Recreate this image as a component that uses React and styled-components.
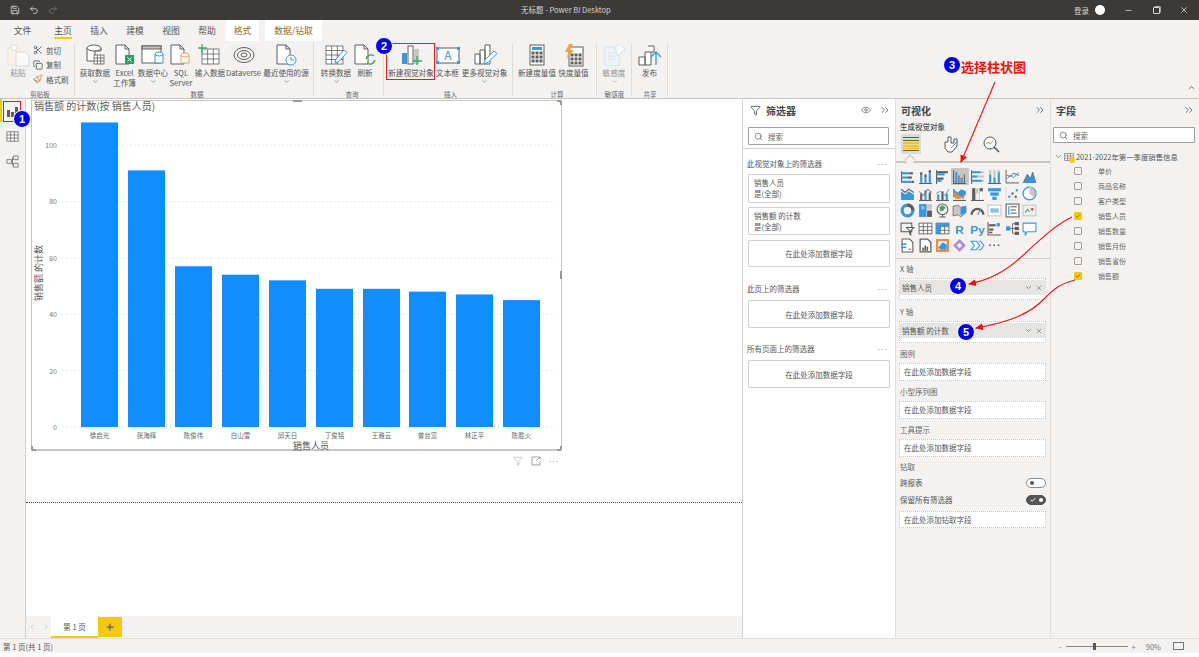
import React from "react";
import styled, { createGlobalStyle } from "styled-components";
import { Scissors, Copy, Paintbrush, Save, Undo2, Redo2, Minus, X, Search, Filter, Eye, ChevronsRight, ChevronDown, ChevronUp, ChevronLeft, ChevronRight, Plus, Check } from "lucide-react";

const GREY = "#605e5c";
const BLUE = "#3a96dd";
const LIGHT = "#c8c6c4";

const Bar = ({ r }) => r.map(([x, y, w, h, c], i) => <rect key={i} x={x} y={y} width={w} height={h} fill={c || GREY} />);

const Icon24 = ({ children }) => (
  <svg width="26" height="24" viewBox="0 0 26 24" fill="none" strokeWidth="1" stroke={GREY}>
    {children}
  </svg>
);

const GridLines = ({ x, y, w, h, cols, rows }) => (
  <g stroke={GREY} strokeWidth="0.8" fill="#fff">
    <rect x={x} y={y} width={w} height={h} />
    {Array.from({ length: cols - 1 }, (_, i) => (
      <line key={i} x1={x + ((i + 1) * w) / cols} x2={x + ((i + 1) * w) / cols} y1={y} y2={y + h} />
    ))}
    {Array.from({ length: rows - 1 }, (_, i) => (
      <line key={i} x1={x} x2={x + w} y1={y + ((i + 1) * h) / rows} y2={y + ((i + 1) * h) / rows} />
    ))}
  </g>
);

const Doc = ({ x = 5, y = 2, c = GREY }) => (
  <path d={`M${x} ${y}h9l4 4v15h-13z M${x + 9} ${y}v4h4`} stroke={c} fill="#fff" />
);

const ribbonIcons = {
  getData: (
    <Icon24>
      <path d="M5 5v13h8V8h6V5" fill="#fff" />
      <ellipse cx="12" cy="5" rx="7" ry="3" fill="#fff" />
      <GridLines x={12} y={12} w={10} h={9} cols={3} rows={3} />
    </Icon24>
  ),
  excel: (
    <Icon24>
      <Doc x={4} y={2} />
      <rect x="13" y="12" width="9" height="9" fill="#21a366" stroke="none" />
      <path d="M15.5 14.5l4 4m0-4l-4 4" stroke="#fff" />
    </Icon24>
  ),
  hub: (
    <Icon24>
      <rect x="2" y="3" width="19" height="17" fill="#fff" />
      <rect x="2" y="3" width="19" height="3" fill={LIGHT} />
      <path d="M15 11v9h8v-9" fill="#fff" stroke={BLUE} />
      <ellipse cx="19" cy="11" rx="4" ry="2" fill="#fff" stroke={BLUE} />
    </Icon24>
  ),
  sql: (
    <Icon24>
      <Doc x={3} y={2} />
      <path d="M13 12v8h8v-8" fill="#fff" stroke="#e8a15c" />
      <ellipse cx="17" cy="12" rx="4" ry="2" fill="#fff" stroke="#e8a15c" />
    </Icon24>
  ),
  enter: (
    <Icon24>
      <GridLines x={5} y={6} w={17} h={15} cols={3} rows={3} />
      <path d="M5 1v9M1 5h9" stroke="#3ea86b" strokeWidth="1.3" />
    </Icon24>
  ),
  dataverse: (
    <Icon24>
      <ellipse cx="13" cy="12" rx="10" ry="7.5" />
      <ellipse cx="13" cy="12" rx="6.5" ry="4.5" />
      <ellipse cx="13" cy="12" rx="3" ry="2" />
    </Icon24>
  ),
  recent: (
    <Icon24>
      <Doc x={4} y={2} />
      <circle cx="18" cy="17" r="5" fill="#fff" stroke={BLUE} />
      <path d="M18 14v3h3" stroke={BLUE} />
    </Icon24>
  ),
  transform: (
    <Icon24>
      <GridLines x={3} y={3} w={17} h={18} cols={3} rows={4} />
      <path d="M12 20l1-4 8-9 3 2.5-8 9z" fill="#fff" stroke={BLUE} />
    </Icon24>
  ),
  refresh: (
    <Icon24>
      <Doc x={3} y={2} />
      <path d="M14 16a5 5 0 0 1 8-3M23 17a5 5 0 0 1-8 3" stroke="#3ea86b" strokeWidth="1.4" />
    </Icon24>
  ),
  newVisual: (
    <Icon24>
      <rect x="4" y="10" width="5" height="11" fill={BLUE} stroke="none" />
      <rect x="10" y="3" width="5" height="18" fill="#fff" />
      <rect x="16" y="6" width="5" height="15" fill={LIGHT} stroke="none" />
      <path d="M19 13v9M15 18h9" stroke="#3ea86b" strokeWidth="1.3" />
    </Icon24>
  ),
  textBox: (
    <Icon24>
      <rect x="2" y="5" width="22" height="15" fill="#fff" stroke={GREY} />
      <text x="13" y="17" textAnchor="middle" fontSize="12" fill={BLUE} stroke="none">A</text>
      <path d="M1 4h3v3H1zM22 4h3v3h-3zM1 18h3v3H1zM22 18h3v3h-3z" fill={BLUE} stroke="none" />
    </Icon24>
  ),
  moreVisual: (
    <Icon24>
      <path d="M3 11h5v10H3zM8 7h5v14H8zM13 2h5v19h-5z" fill="#fff" />
      <path d="M12 21l1-4 9-9 3 2.5-9 9z" fill="#fff" stroke={BLUE} />
    </Icon24>
  ),
  measure: (
    <Icon24>
      <rect x="6" y="2" width="14" height="20" fill="#fff" />
      <rect x="8" y="4" width="10" height="3" fill={BLUE} stroke="none" />
      <Bar r={[[8, 9, 2, 2], [12, 9, 2, 2], [16, 9, 2, 2], [8, 13, 2, 2], [12, 13, 2, 2], [16, 13, 2, 2], [8, 17, 2, 2], [12, 17, 2, 2], [16, 17, 2, 2]]} />
    </Icon24>
  ),
  quick: (
    <Icon24>
      <rect x="8" y="4" width="14" height="19" fill="#fff" />
      <Bar r={[[10, 11, 2, 2], [14, 11, 2, 2], [18, 11, 2, 2], [10, 15, 2, 2], [14, 15, 2, 2], [18, 15, 2, 2], [10, 19, 2, 2], [14, 19, 2, 2], [18, 19, 2, 2]]} />
      <path d="M8 1l-4 8h4l-3 7 8-9H9l3-6z" fill="#f2a33a" stroke="none" />
    </Icon24>
  ),
  sensitivity: (
    <Icon24>
      <path d="M4 4h14v19H4z" fill="#eaf3fa" stroke="#c6dcec" />
      <path d="M7 10h8M7 13h8M7 16h6" stroke="#c6dcec" />
      <path d="M14 4l5-3 5 5-7 7z" fill="#fff" stroke="#c6dcec" />
    </Icon24>
  ),
  publish: (
    <Icon24>
      <path d="M2 14h6v8H2zM8 9h6v13H8zM11 3h6v6h-3" fill="#fff" />
      <path d="M19 22V9m-5 5l5-5 5 5" stroke={BLUE} strokeWidth="1.3" />
    </Icon24>
  ),
  paste: (
    <svg width="26" height="24" viewBox="0 0 26 24" fill="none">
      <path d="M3 5h12v17H3z" fill="#faf3ea" stroke="#ecd9bf" />
      <rect x="6" y="2" width="6" height="5" fill="#fff" stroke="#d5d3d0" />
      <path d="M11 9h9l4 4v10H11z" fill="#fff" stroke="#c8c6c4" />
    </svg>
  ),
};

const vizIcons = [
  <Bar r={[[1, 2, 1, 11], [2, 3, 7, 2, BLUE], [9, 3, 3, 2], [2, 7, 5, 2, BLUE], [7, 7, 4, 2], [2, 11, 9, 2, BLUE], [11, 11, 2, 2]]} />,
  <Bar r={[[1, 13, 12, 1], [2, 6, 2, 7, BLUE], [2, 3, 2, 3], [6, 8, 2, 5, BLUE], [6, 5, 2, 3], [10, 4, 2, 9, BLUE], [10, 1, 2, 3]]} />,
  <Bar r={[[1, 1, 1, 13], [2, 2, 10, 2], [2, 4, 7, 2, BLUE], [2, 8, 6, 2], [2, 10, 4, 2, BLUE]]} />,
  <Bar r={[[1, 13, 12, 1], [1, 1, 1, 13], [3, 3, 2, 10, BLUE], [6, 6, 1, 7], [8, 8, 2, 5, BLUE], [11, 5, 1, 8]]} />,
  <Bar r={[[1, 1, 1, 13], [2, 2, 8, 2, BLUE], [10, 2, 3, 2, LIGHT], [2, 6, 5, 2, BLUE], [7, 6, 6, 2, LIGHT], [2, 10, 9, 2, BLUE], [11, 10, 2, 2, LIGHT]]} />,
  <Bar r={[[1, 13, 12, 1], [2, 1, 2, 4, LIGHT], [2, 5, 2, 8, BLUE], [6, 1, 2, 7, LIGHT], [6, 8, 2, 5, BLUE], [10, 1, 2, 2, LIGHT], [10, 3, 2, 10, BLUE]]} />,
  <g fill="none" strokeWidth="0.9">
    <path d="M1 1v12h12" stroke={GREY} />
    <path d="M2 9l3-3 3 2 5-5" stroke={BLUE} />
    <path d="M2 6l3 1 3-3 5 2" stroke={GREY} />
  </g>,
  <g>
    <path d="M1 13l4-8 3 4 2-6 3 10z" fill={BLUE} />
    <path d="M1 13l4-8 3 4 2-6 3 10" fill="none" stroke={GREY} strokeWidth="0.7" />
  </g>,
  <g>
    <path d="M1 5l4 3 3-3 5 3v5H1z" fill={BLUE} />
    <path d="M1 3l4 3 3-3 5 3" fill="none" stroke={GREY} />
  </g>,
  <g>
    <Bar r={[[1, 13, 12, 1], [2, 7, 2, 6], [6, 4, 2, 9, BLUE], [10, 6, 2, 7]]} />
    <path d="M1 5l4 4 4-6 4 3" fill="none" stroke={GREY} strokeWidth="0.8" />
  </g>,
  <g>
    <Bar r={[[1, 13, 12, 1], [2, 8, 2, 5, BLUE], [6, 5, 2, 8], [10, 7, 2, 6, BLUE]]} />
    <path d="M1 7l4-2 4 4 4-6" fill="none" stroke={BLUE} strokeWidth="0.8" />
  </g>,
  <g>
    <path d="M1 2l4 4 4-3 4 2v3l-4 3-4-3-4 3z" fill={BLUE} />
    <path d="M1 6l4 1 4 5 4-6-2 6H3z" fill="#e8883a" />
    <Bar r={[[1, 13, 12, 1]]} />
  </g>,
  <Bar r={[[1, 13, 12, 1], [2, 2, 3, 11], [5, 2, 3, 5, LIGHT], [9, 2, 3, 11, GREY], [9, 5, 3, 8, "#fff"]]} />,
  <g fill={BLUE}>
    <rect x="1" y="2" width="12" height="3" />
    <rect x="3" y="6" width="8" height="3" />
    <rect x="5" y="10" width="4" height="3" />
  </g>,
  <g>
    <path d="M1 1v12h12" fill="none" stroke={LIGHT} strokeDasharray="1 1" />
    <Bar r={[[3, 9, 2, 2, BLUE], [6, 6, 2, 2], [10, 3, 2, 2, BLUE], [9, 9, 2, 2]]} />
  </g>,
  <g>
    <circle cx="7" cy="7" r="6" fill="#fff" stroke={BLUE} strokeWidth="1.2" />
    <path d="M7 7V1a6 6 0 0 1 4 10z" fill={LIGHT} />
  </g>,
  <g fill="none">
    <circle cx="7" cy="7" r="5" stroke={BLUE} strokeWidth="3" />
    <path d="M7 2a5 5 0 0 1 5 5" stroke={GREY} strokeWidth="3" />
  </g>,
  <Bar r={[[1, 1, 7, 12, BLUE], [8.5, 1, 4.5, 5, LIGHT], [8.5, 7, 4.5, 6, GREY], [3, 3, 3, 3, "#8cc4ee"]]} />,
  <g fill="none">
    <circle cx="7" cy="6" r="5" stroke={GREY} />
    <path d="M4 4l3-2 3 2-2 3-3 1z" fill="#3ea86b" />
    <path d="M7 11v2M4 13h6" stroke={GREY} />
  </g>,
  <g>
    <path d="M1 3l5-1 2 2 5-1v6l-5 4-2-2-5 1z" fill={LIGHT} stroke={GREY} strokeWidth="0.7" />
    <path d="M8 4l5-1v6l-5 2z" fill={BLUE} />
  </g>,
  <g fill="none">
    <path d="M1.5 11a5.5 5.5 0 0 1 11 0" stroke={GREY} strokeWidth="2.2" />
    <path d="M7 11l3-5" stroke={BLUE} />
  </g>,
  <g>
    <rect x="1" y="2" width="12" height="10" fill="#fff" stroke={LIGHT} />
    <rect x="3" y="5" width="8" height="4" fill={BLUE} opacity="0.6" />
  </g>,
  <g>
    <rect x="1" y="1" width="12" height="12" fill="#fff" stroke={GREY} />
    <Bar r={[[3, 3, 1, 8, BLUE], [5, 3, 6, 1], [5, 6, 5, 1], [5, 9, 6, 1]]} />
  </g>,
  <g>
    <rect x="1" y="2" width="12" height="10" fill="#eee" stroke={LIGHT} />
    <path d="M3 9l2-3 2 2" fill="none" stroke="#3ea86b" />
    <path d="M8 5h3l-1.5 3z" fill="#d13438" />
  </g>,
  <g fill="none">
    <rect x="1" y="2" width="10" height="8" stroke={GREY} />
    <path d="M6 6h7l-3 3v4l-1-1V9z" fill="#fff" stroke={GREY} />
  </g>,
  <GridLines x={1} y={2} w={12} h={10} cols={3} rows={3} />,
  <g>
    <GridLines x={1} y={2} w={12} h={10} cols={3} rows={3} />
    <Bar r={[[1, 2, 12, 3, BLUE], [1, 5, 4, 7, BLUE]]} />
  </g>,
  <text x="7" y="12" fontSize="11" fontWeight="700" textAnchor="middle" fill={BLUE}>R</text>,
  <text x="7" y="12" fontSize="11" fontWeight="700" textAnchor="middle" fill={BLUE}>Py</text>,
  <g>
    <path d="M1 1v12h12" fill="none" stroke={GREY} />
    <Bar r={[[2, 3, 6, 2], [2, 7, 4, 2], [2, 10, 3, 1.5], [9, 2, 3, 3, BLUE]]} />
  </g>,
  <g>
    <Bar r={[[1, 5, 4, 4, BLUE], [9, 1, 4, 3, GREY], [9, 5.5, 4, 3, GREY], [9, 10, 4, 3, GREY]]} />
    <path d="M5 7h4M7 2.5h2M7 11.5h2M7 2.5v9" stroke={GREY} fill="none" strokeWidth="0.8" />
  </g>,
  <path d="M1 2h12v8H5l-2 3v-3H1z" fill="#fff" stroke={BLUE} />,
  <g>
    <path d="M2 1h7l3 3v9H2z" fill="#fff" stroke={GREY} />
    <Bar r={[[1, 5, 5, 1.5, BLUE], [1, 8, 5, 1.5, BLUE], [8, 10, 2, 1]]} />
  </g>,
  <g>
    <path d="M2 1h7l3 3v9H2z" fill="#fff" stroke={GREY} strokeWidth="1.2" />
    <Bar r={[[4, 9, 1.5, 3], [6, 7, 1.5, 5], [8, 8, 1.5, 4]]} />
  </g>,
  <g>
    <rect x="1" y="1" width="12" height="12" fill="#e8883a" />
    <rect x="3" y="3" width="8" height="8" fill="#fff" />
    <path d="M3 9l4-5 4 2v5H5z" fill={BLUE} />
  </g>,
  <path d="M7 1l6 6-6 6-6-6z M7 4.5L4.5 7 7 9.5 9.5 7z" fill="#b58ad6" fillRule="evenodd" />,
  <g fill="none" stroke={BLUE}>
    <path d="M1 3h5l3 4-3 4H1l3-4z" />
    <path d="M8 3h2l3 4-3 4H8" />
  </g>,
  <Bar r={[[2, 6, 1.5, 1.5], [6, 6, 1.5, 1.5], [10, 6, 1.5, 1.5]]} />,
];

const fieldRows = [
  ["单价", false],
  ["商品名称", false],
  ["客户类型", false],
  ["销售人员", true],
  ["销售数量", false],
  ["销售月份", false],
  ["销售省份", false],
  ["销售额", true],
];

const bars = [
  ["徐启光", 81, 108],
  ["张海辉", 128, 91],
  ["陈俊伟", 175, 57],
  ["白山雪", 222, 54],
  ["邱天日", 269, 52],
  ["丁俊铭", 316, 49],
  ["王雅云", 363, 49],
  ["曾台富", 409, 48],
  ["林正平", 456, 47],
  ["陈胜火", 503, 45],
];

const SalesChart = () => (
  <svg width="531" height="351" viewBox="31 100 531 351">
    <text x="34" y="110" fontSize="10" fill="#605e5c">销售额 的计数(按 销售人员)</text>
    {[0, 20, 40, 60, 80, 100].map((v) => (
      <g key={v}>
        <line x1="62" x2="555" y1={427 - v * 2.82} y2={427 - v * 2.82} stroke="#d9d9d9" strokeWidth="0.7" strokeDasharray="1.5 2.5" />
        <text x="57" y={430 - v * 2.82} fontSize="7" fill="#777" textAnchor="end">{v}</text>
      </g>
    ))}
    {bars.map(([name, x, v]) => (
      <g key={name}>
        <rect x={x} y={427 - v * 2.82} width="37" height={v * 2.82} fill="#118dff" />
        <text x={x + 18.5} y="437.5" fontSize="6.5" fill="#666" textAnchor="middle">{name}</text>
      </g>
    ))}
    <text x="311" y="448.5" fontSize="9" fill="#555" textAnchor="middle">销售人员</text>
    <text transform="translate(41.5 273) rotate(-90)" fontSize="9" fill="#555" textAnchor="middle">销售额 的计数</text>
    <path d="M32 450v-4M32 450h4M561 450v-4M561 450h-4M561 101v4M561 101h-4M561 271v8M293 101h9M293 450h9" stroke="#999" strokeWidth="2" fill="none" />
  </svg>
);

const Annotations = () => (
  <Overlay width="1199" height="657" viewBox="0 0 1199 657">
    <defs>
      <marker id="head" markerUnits="userSpaceOnUse" markerWidth="9" markerHeight="8" refX="7" refY="3.5" orient="auto">
        <path d="M0 0l8 3.5-8 3.5z" fill="#f01010" />
      </marker>
    </defs>
    <g fill="none" stroke="#f01010" strokeWidth="1.1">
      <path d="M995 82L961 162" markerEnd="url(#head)" />
      <path d="M1072 217C1055 225 1040 240 1020 258C1005 272 990 280 969 284" markerEnd="url(#head)" />
      <path d="M1075 280C1060 284 1055 288 1045 298C1030 314 1010 322 976 328" markerEnd="url(#head)" />
    </g>
  </Overlay>
);

const RibbonItem = ({ w, icon, children, more, dim }) => (
  <Item $w={w} $dim={dim}>
    <IconSlot>{ribbonIcons[icon]}</IconSlot>
    <ItemLabel>{children}</ItemLabel>
    {more && <ChevronDown size={7} color="#666" />}
  </Item>
);

const Well = ({ children, mt, h = 18 }) => (
  <WellBox $mt={mt} $h={h}>
    {children}
  </WellBox>
);

const FieldWell = ({ mt, children }) => (
  <WellBox $mt={mt} $h={22} $chip>
    <Chip>
      <span>{children}</span>
      <ChipIcons>
        <ChevronDown size={9} />
        <X size={8} />
      </ChipIcons>
    </Chip>
  </WellBox>
);

const PanelHead = ({ title, eye, icon }) => (
  <Head>
    <HeadTitle>
      {icon}
      {title}
    </HeadTitle>
    <HeadIcons>
      {eye && <Eye size={10} color="#777" />}
      <ChevronsRight size={12} color="#777" />
    </HeadIcons>
  </Head>
);

export default function App() {
  return (
    <>
      <GlobalStyle />
      <Page>
        <TitleBar>
          <QuickTools>
            <Save size={10} />
            <Undo2 size={10} />
            <Redo2 size={10} color="#77736f" />
          </QuickTools>
          <WindowTitle>无标题 - Power BI Desktop</WindowTitle>
          <WindowTools>
            <span>登录</span>
            <Avatar />
            <WinButton><Minus size={9} /></WinButton>
            <WinButton><RestoreGlyph /></WinButton>
            <WinButton><X size={10} /></WinButton>
          </WindowTools>
        </TitleBar>

        <TabRow>
          <Tab $w={45}>文件</Tab>
          <Tab $w={36} $active>主页</Tab>
          <Tab $w={36}>插入</Tab>
          <Tab $w={36}>建模</Tab>
          <Tab $w={36}>视图</Tab>
          <Tab $w={36}>帮助</Tab>
          <Tab $w={33} $light $ml={1}>格式</Tab>
          <Tab $w={57} $light $ml={6}>数据/钻取</Tab>
        </TabRow>

        <Ribbon>
          <Group $w={75} $pad={5} label="剪贴板">
            <RibbonItem w={26} icon="paste" dim>粘贴</RibbonItem>
            <SmallList>
              <SmallRow><Scissors size={10} color="#555" />剪切</SmallRow>
              <SmallRow><Copy size={10} color="#555" />复制</SmallRow>
              <SmallRow><Paintbrush size={10} color="#c9803a" />格式刷</SmallRow>
            </SmallList>
          </Group>
          <Group $w={239} $pad={5} label="数据">
            <RibbonItem w={30} icon="getData" more>获取数据</RibbonItem>
            <RibbonItem w={29} icon="excel">Excel<br />工作簿</RibbonItem>
            <RibbonItem w={28} icon="hub" more>数据中心</RibbonItem>
            <RibbonItem w={28} icon="sql">SQL<br />Server</RibbonItem>
            <RibbonItem w={30} icon="enter">输入数据</RibbonItem>
            <RibbonItem w={37} icon="dataverse">Dataverse</RibbonItem>
            <RibbonItem w={48} icon="recent" more>最近使用的源</RibbonItem>
          </Group>
          <Group $w={70} $pad={6} label="查询">
            <RibbonItem w={32} icon="transform" more>转换数据</RibbonItem>
            <RibbonItem w={26} icon="refresh">刷新</RibbonItem>
          </Group>
          <Group $w={129} $pad={4} label="插入">
            <RibbonItem w={46} icon="newVisual">新建视觉对象</RibbonItem>
            <RibbonItem w={27} icon="textBox">文本框</RibbonItem>
            <RibbonItem w={47} icon="moreVisual" more>更多视觉对象</RibbonItem>
          </Group>
          <Group $w={84} $pad={4} label="计算">
            <RibbonItem w={40} icon="measure">新建度量值</RibbonItem>
            <RibbonItem w={33} icon="quick">快度量值</RibbonItem>
          </Group>
          <Group $w={35} $pad={0} label="敏感度">
            <RibbonItem w={34} icon="sensitivity" more dim>敏感度</RibbonItem>
          </Group>
          <Group $w={36} $pad={0} label="共享">
            <RibbonItem w={35} icon="publish">发布</RibbonItem>
          </Group>
          <Collapse><ChevronUp size={9} color="#444" /></Collapse>
        </Ribbon>

        <Main>
          <Rail>
            <RailButton $active>
              <svg width="12" height="12" viewBox="0 0 12 12"><Bar r={[[1, 5, 3, 7], [5, 7, 3, 5], [9, 2, 3, 10]]} /></svg>
            </RailButton>
            <RailButton>
              <svg width="13" height="13" viewBox="0 0 14 14"><GridLines x={1} y={2} w={12} h={10} cols={3} rows={3} /></svg>
            </RailButton>
            <RailButton>
              <svg width="13" height="13" viewBox="0 0 14 14" fill="#f3f2f1" stroke={GREY} strokeWidth="0.8">
                <path d="M8 1h5v4H8zM1 5h5v4H1zM8 9h5v4H8zM6 7h1M7 3v8M7 3h1M7 11h1" />
              </svg>
            </RailButton>
          </Rail>

          <CanvasColumn>
            <Canvas>
              <Visual>
                <SalesChart />
              </Visual>
              <VisualActions>
                <Filter size={10} strokeWidth={1} />
                <svg width="10" height="10" viewBox="0 0 10 10" fill="none" stroke="#8a8886" strokeWidth="0.8">
                  <path d="M6 1H1v8h8V5M5 5l4-4M6.5 1H9v2.5" />
                </svg>
                <Dots>···</Dots>
              </VisualActions>
              <PageEnd />
            </Canvas>
            <PageTabs>
              <PageArrows>
                <ChevronLeft size={8} />
                <ChevronRight size={8} />
              </PageArrows>
              <PageTab>第 1 页</PageTab>
              <AddPage><Plus size={10} strokeWidth={3} color="#605e5c" /></AddPage>
            </PageTabs>
          </CanvasColumn>

          <FilterPanel>
            <PanelHead title="筛选器" eye icon={<Filter size={11} color="#555" />} />
            <SearchBox $ml={5} $mr={6} $h={18}><Search size={9} color="#666" />搜索</SearchBox>
            <Rule $mt={3} />
            <FilterLabel $mt={10}>此视觉对象上的筛选器<Dots>···</Dots></FilterLabel>
            <FilterCard $mt={5} $h={29}>销售人员<br />是(全部)</FilterCard>
            <FilterCard $mt={4} $h={28}>销售额 的计数<br />是(全部)</FilterCard>
            <FilterDrop $mt={5} $h={27}>在此处添加数据字段</FilterDrop>
            <FilterLabel $mt={17}>此页上的筛选器<Dots>···</Dots></FilterLabel>
            <FilterDrop $mt={6} $h={28}>在此处添加数据字段</FilterDrop>
            <FilterLabel $mt={16}>所有页面上的筛选器<Dots>···</Dots></FilterLabel>
            <FilterDrop $mt={6} $h={28}>在此处添加数据字段</FilterDrop>
          </FilterPanel>

          <VizPanel>
            <PanelHead title="可视化" />
            <SubHead>生成视觉对象</SubHead>
            <ModeRow>
              <ModeTile $active>
                <svg width="16" height="14" viewBox="0 0 16 14">
                  <Bar r={[[0, 0, 16, 1], [0, 3, 16, 1], [0, 13, 16, 1], [0, 5, 16, 2, "#f2c811"], [0, 8, 16, 2, "#f2c811"], [0, 11, 16, 1, "#f2c811"]]} />
                </svg>
              </ModeTile>
              <ModeTile $ml={20}>
                <svg width="18" height="18" viewBox="0 0 18 18" fill="#fff" stroke="#555">
                  <path d="M6 2h3v6h3V4h3v7l-5 6H6l-3-4V7h3z" />
                  <path d="M9 13l6-6" stroke={BLUE} />
                </svg>
              </ModeTile>
              <ModeTile $ml={20}>
                <svg width="18" height="18" viewBox="0 0 18 18" fill="#fff" stroke="#555">
                  <circle cx="8" cy="8" r="6" />
                  <path d="M4 9l2-2 2 2 3-3" stroke="#e8883a" fill="none" />
                  <path d="M12 12l5 5" strokeWidth="1.6" />
                </svg>
              </ModeTile>
            </ModeRow>
            <VizGrid>
              {vizIcons.map((icon, i) => (
                <VizCell key={i} $active={i === 3}>
                  <svg width="15" height="15" viewBox="0 0 14 14" fontFamily="Liberation Sans, sans-serif">{icon}</svg>
                </VizCell>
              ))}
            </VizGrid>
            <Rule $mt={3.5} />
            <WellLabel $mt={5}>X 轴</WellLabel>
            <FieldWell mt={4}>销售人员</FieldWell>
            <WellLabel $mt={7}>Y 轴</WellLabel>
            <FieldWell mt={4}>销售额 的计数</FieldWell>
            <WellLabel $mt={6}>图例</WellLabel>
            <Well mt={4}>在此处添加数据字段</Well>
            <WellLabel $mt={6}>小型序列图</WellLabel>
            <Well mt={4}>在此处添加数据字段</Well>
            <WellLabel $mt={6}>工具提示</WellLabel>
            <Well mt={4}>在此处添加数据字段</Well>
            <WellLabel $mt={5}>钻取</WellLabel>
            <ToggleRow $mt={6}>跨报表<Toggle /></ToggleRow>
            <ToggleRow $mt={7}>保留所有筛选器<Toggle $on><Check size={6} color="#fff" strokeWidth={4} /></Toggle></ToggleRow>
            <Well mt={6} h={17}>在此处添加钻取字段</Well>
          </VizPanel>

          <FieldsPanel>
            <PanelHead title="字段" />
            <SearchBox $ml={2} $mr={4} $h={16}><Search size={9} color="#666" />搜索</SearchBox>
            <TreeHead>
              <ChevronDown size={9} color="#777" />
              <TableGlyph>
                <svg width="10" height="10" viewBox="0 0 14 14"><GridLines x={1} y={2} w={12} h={10} cols={3} rows={3} /></svg>
                <TableDot />
              </TableGlyph>
              2021-2022年第一季度销售信息
            </TreeHead>
            {fieldRows.map(([name, on]) => (
              <FieldRow key={name}>
                <CheckBox $on={on}>{on && <Check size={6} color="#7a6200" strokeWidth={3} />}</CheckBox>
                {name}
              </FieldRow>
            ))}
          </FieldsPanel>
        </Main>

        <StatusBar>
          <span>第 1 页(共 1 页)</span>
          <ZoomTools>
            <span>-</span>
            <ZoomTrack><ZoomThumb /></ZoomTrack>
            <span>+</span>
            <ZoomValue>90%</ZoomValue>
            <FitGlyph />
          </ZoomTools>
        </StatusBar>

        <RedBox $x={386} $y={43} $w={49} $h={37} />
        <RedBox $x={3} $y={101} $w={18} $h={21} />
        <Annotations />
        <Badge $x={22} $y={119}>1</Badge>
        <Badge $x={384} $y={46}>2</Badge>
        <Badge $x={952} $y={65}>3</Badge>
        <Callout>选择柱状图</Callout>
        <Badge $x={958} $y={286}>4</Badge>
        <Badge $x={966} $y={332}>5</Badge>
      </Page>
    </>
  );
}

const GlobalStyle = createGlobalStyle`
  * { box-sizing: border-box; }
  html, body { margin: 0; background: #fff; }
  body { font-family: "Noto Sans CJK SC", "Noto Sans", sans-serif; color: #555; }
`;

const Page = styled.div`
  position: relative;
  width: 1199px;
  height: 657px;
  overflow: hidden;
  display: flex;
  flex-direction: column;
  background: #fff;
`;

const TitleBar = styled.div`
  height: 20px;
  background: #3b3a39;
  color: #d8d6d3;
  display: flex;
  align-items: center;
  justify-content: space-between;
  padding: 0 1px 0 10px;
  font-size: 7.5px;
  position: relative;
`;

const QuickTools = styled.div`
  display: flex;
  gap: 9px;
`;

const WindowTitle = styled.div`
  position: absolute;
  left: 521px;
  top: 4px;
  line-height: 12px;
`;

const WindowTools = styled.div`
  display: flex;
  align-items: center;
`;

const Avatar = styled.div`
  width: 10px;
  height: 10px;
  border-radius: 50%;
  background: #fff;
  margin: 0 9px 0 6px;
`;

const WinButton = styled.div`
  width: 28px;
  display: flex;
  justify-content: center;
`;

const RestoreGlyph = styled.div`
  width: 7px;
  height: 7px;
  border: 1px solid #d8d6d3;
  border-radius: 1px;
  box-shadow: 1px -1px 0 -0.3px #d8d6d3;
`;

const TabRow = styled.div`
  height: 21px;
  background: #f3f2f1;
  display: flex;
  font-size: 8.8px;
  color: #555;
`;

const Tab = styled.div`
  width: ${(p) => p.$w}px;
  margin-left: ${(p) => p.$ml || 0}px;
  background: ${(p) => (p.$light ? "#fff" : "transparent")};
  display: flex;
  align-items: center;
  justify-content: center;
  position: relative;
  color: ${(p) => (p.$light ? "#8a6d1a" : "#555")};
  &::after {
    content: "";
    display: ${(p) => (p.$active ? "block" : "none")};
    position: absolute;
    left: 9px;
    right: 9px;
    bottom: 2px;
    height: 2px;
    background: #f2c811;
  }
`;

const Ribbon = styled.div`
  height: 58px;
  background: #f3f2f1;
  border-bottom: 1px solid #c8c6c4;
  display: flex;
  position: relative;
`;

const GroupBox = styled.div`
  width: ${(p) => p.$w}px;
  padding: 2px 0 0 ${(p) => p.$pad}px;
  display: flex;
  flex-direction: column;
  position: relative;
  &::after {
    content: "";
    position: absolute;
    right: 0;
    top: 2px;
    bottom: 2px;
    width: 1px;
    background: #dedcda;
  }
`;

const GroupItems = styled.div`
  flex: 1;
  display: flex;
  min-height: 0;
`;

const GroupName = styled.div`
  font-size: 6.5px;
  line-height: 9px;
  height: 9px;
  margin-bottom: -1px;
  text-align: center;
  color: #666;
`;

const Group = ({ label, children, ...rest }) => (
  <GroupBox {...rest}>
    <GroupItems>{children}</GroupItems>
    <GroupName>{label}</GroupName>
  </GroupBox>
);

const Item = styled.div`
  width: ${(p) => p.$w}px;
  flex: none;
  display: flex;
  flex-direction: column;
  align-items: center;
  opacity: ${(p) => (p.$dim ? 0.6 : 1)};
`;

const IconSlot = styled.div`
  height: 24px;
  display: flex;
  align-items: flex-end;
`;

const ItemLabel = styled.div`
  font-size: 7.6px;
  line-height: 10px;
  margin-top: 1px;
  text-align: center;
  white-space: nowrap;
  color: #555;
`;

const SmallList = styled.div`
  display: flex;
  flex-direction: column;
  gap: 2.5px;
  margin: 1px 0 0 2px;
`;

const SmallRow = styled.div`
  display: flex;
  align-items: center;
  gap: 3px;
  height: 12px;
  font-size: 7.5px;
  white-space: nowrap;
`;

const Collapse = styled.div`
  position: absolute;
  right: 3px;
  bottom: 1px;
`;

const Main = styled.div`
  flex: 1;
  min-height: 0;
  display: flex;
`;

const Rail = styled.div`
  width: 26px;
  background: #f3f2f1;
  border-right: 1px solid #d2d0ce;
  display: flex;
  flex-direction: column;
`;

const RailButton = styled.div`
  height: 25px;
  display: flex;
  align-items: center;
  justify-content: center;
  padding-right: 1px;
  ${(p) => p.$active && "box-shadow: inset 2px 0 0 #f2c811; height: 23px; margin-bottom: 1.5px;"}
`;

const CanvasColumn = styled.div`
  width: 716px;
  display: flex;
  flex-direction: column;
`;

const Canvas = styled.div`
  flex: 1;
  background: #fff;
  padding: 1px 0 0 5px;
`;

const Visual = styled.div`
  width: 531px;
  height: 351px;
  border: 1px solid #c8c6c4;
  border-bottom-width: 2px;
  background: #fff;
  & > svg {
    display: block;
    margin: -1px;
    overflow: visible;
  }
`;

const VisualActions = styled.div`
  width: 531px;
  height: 16px;
  margin-top: 2px;
  display: flex;
  align-items: center;
  justify-content: flex-end;
  gap: 8px;
  color: #8a8886;
  font-size: 9px;
  padding-right: 3px;
`;

const Dots = styled.span`
  font-family: "Liberation Sans", sans-serif;
  font-size: 9px;
  color: #999;
  letter-spacing: 0.5px;
`;

const PageEnd = styled.div`
  margin: 33px 0 0 -5px;
  border-top: 1px dotted #444;
`;

const PageTabs = styled.div`
  height: 22px;
  background: #f3f2f1;
  display: flex;
`;

const PageArrows = styled.div`
  width: 25px;
  display: flex;
  align-items: center;
  justify-content: center;
  gap: 6px;
  color: #bbb;
`;

const PageTab = styled.div`
  width: 47px;
  background: #fff;
  border-bottom: 2px solid #f2c811;
  font-size: 7.5px;
  display: flex;
  align-items: center;
  justify-content: center;
`;

const AddPage = styled.div`
  width: 24px;
  height: 20px;
  margin-top: 1px;
  background: #f2c811;
  display: flex;
  align-items: center;
  justify-content: center;
`;

const Head = styled.div`
  height: 22px;
  padding: 0 4px 0 5px;
  display: flex;
  align-items: center;
  justify-content: space-between;
`;

const HeadTitle = styled.div`
  display: flex;
  align-items: center;
  gap: 5px;
  font-size: 10px;
  font-weight: 700;
  color: #444;
`;

const HeadIcons = styled.div`
  display: flex;
  align-items: center;
  gap: 8px;
`;

const FilterPanel = styled.div`
  width: 153px;
  background: #fff;
  border-left: 1px solid #d2d0ce;
  display: flex;
  flex-direction: column;
  & > ${Head} { padding-left: 7px; }
`;

const VizPanel = styled.div`
  width: 155px;
  background: #f3f2f1;
  border-left: 1px solid #e1dfdd;
  display: flex;
  flex-direction: column;
`;

const FieldsPanel = styled.div`
  flex: 1;
  background: #f3f2f1;
  border-left: 1px solid #e1dfdd;
  display: flex;
  flex-direction: column;
`;

const SearchBox = styled.div`
  height: ${(p) => p.$h}px;
  margin: 6px ${(p) => p.$mr}px 0 ${(p) => p.$ml}px;
  background: #fff;
  border: 1px solid #a19f9d;
  border-radius: 1px;
  display: flex;
  align-items: center;
  gap: 5px;
  padding-left: 5px;
  font-size: 7.5px;
  color: #666;
`;

const Rule = styled.div`
  margin-top: ${(p) => p.$mt}px;
  height: 1px;
  background: #d2d0ce;
`;

const FilterLabel = styled.div`
  margin-top: ${(p) => p.$mt}px;
  padding: 0 7px 0 4px;
  font-size: 7.5px;
  line-height: 10px;
  display: flex;
  justify-content: space-between;
`;

const FilterCard = styled.div`
  margin: ${(p) => p.$mt}px 5px 0 5px;
  height: ${(p) => p.$h}px;
  border: 1px solid #d2d0ce;
  border-radius: 1px;
  padding: 2px 5px;
  font-size: 7.5px;
  line-height: 11px;
`;

const FilterDrop = styled(FilterCard)`
  display: flex;
  align-items: center;
  justify-content: center;
  padding: 0;
`;

const SubHead = styled.div`
  padding-left: 4px;
  font-size: 7.5px;
  font-weight: 500;
  line-height: 10px;
  margin-top: 1px;
  color: #444;
`;

const ModeRow = styled.div`
  height: 29px;
  margin-top: 2px;
  padding-left: 5px;
  display: flex;
  align-items: flex-start;
  border-bottom: 2px solid #c8c6c4;
  position: relative;
  &::after {
    content: "";
    position: absolute;
    left: 10px;
    bottom: -3px;
    width: 7px;
    height: 7px;
    background: #f3f2f1;
    border-left: 1px solid #c8c6c4;
    border-top: 1px solid #c8c6c4;
    transform: rotate(45deg);
  }
`;

const ModeTile = styled.div`
  width: 20px;
  height: 20px;
  margin-left: ${(p) => p.$ml || 0}px;
  background: ${(p) => (p.$active ? "#dcdad8" : "transparent")};
  display: flex;
  align-items: center;
  justify-content: center;
`;

const VizGrid = styled.div`
  margin-top: 4.5px;
  padding-left: 3px;
  display: grid;
  grid-template-columns: repeat(8, 17.4px);
  grid-auto-rows: 17.4px;
`;

const VizCell = styled.div`
  display: flex;
  align-items: center;
  justify-content: center;
  background: ${(p) => (p.$active ? "#c8c6c4" : "transparent")};
`;

const WellLabel = styled.div`
  margin-top: ${(p) => p.$mt}px;
  padding-left: 4px;
  font-size: 7.5px;
  line-height: 10px;
  color: #666;
`;

const WellBox = styled.div`
  margin: ${(p) => p.$mt}px 4px 0 3px;
  height: ${(p) => p.$h}px;
  border: 1px dotted #c8c6c4;
  background: #fff;
  display: flex;
  align-items: center;
  font-size: 7.5px;
  padding-left: ${(p) => (p.$chip ? 0 : 4)}px;
  ${(p) => p.$chip && "padding-bottom: 2px;"}
`;

const Chip = styled.div`
  flex: 1;
  height: 15px;
  background: #e6e5e4;
  display: flex;
  align-items: center;
  justify-content: space-between;
  padding: 0 2px;
`;

const ChipIcons = styled.div`
  display: flex;
  align-items: center;
  gap: 2px;
  color: #777;
`;

const ToggleRow = styled.div`
  margin-top: ${(p) => p.$mt}px;
  padding: 0 4px;
  height: 10px;
  display: flex;
  align-items: center;
  justify-content: space-between;
  font-size: 7.5px;
`;

const Toggle = styled.div`
  width: 20px;
  height: 10px;
  border-radius: 5px;
  border: 1px solid ${(p) => (p.$on ? "#555" : "#8a8886")};
  background: ${(p) => (p.$on ? "#555" : "#fff")};
  position: relative;
  padding-left: 3px;
  display: flex;
  align-items: center;
  &::after {
    content: "";
    position: absolute;
    top: 2px;
    left: ${(p) => (p.$on ? 12 : 3)}px;
    width: 4px;
    height: 4px;
    border-radius: 50%;
    background: ${(p) => (p.$on ? "#fff" : "#555")};
  }
`;

const TreeHead = styled.div`
  margin-top: 6px;
  height: 15px;
  padding-left: 3px;
  display: flex;
  align-items: center;
  gap: 1px;
  font-size: 7.4px;
  white-space: nowrap;
`;

const TableGlyph = styled.div`
  position: relative;
  width: 11px;
  display: flex;
`;

const TableDot = styled.div`
  position: absolute;
  left: 5px;
  top: 5px;
  width: 6px;
  height: 6px;
  border-radius: 50%;
  background: #f2c811;
`;

const FieldRow = styled.div`
  height: 14.9px;
  padding-left: 23px;
  display: flex;
  align-items: center;
  gap: 16px;
  font-size: 7px;
  color: #666;
`;

const CheckBox = styled.div`
  width: 8px;
  height: 8px;
  border: 1px solid ${(p) => (p.$on ? "#f2c811" : "#a19f9d")};
  background: ${(p) => (p.$on ? "#f2c811" : "transparent")};
  border-radius: 1px;
  display: flex;
  align-items: center;
  justify-content: center;
`;

const StatusBar = styled.div`
  height: 15px;
  margin-bottom: 4px;
  background: #f3f2f1;
  border-top: 1px solid #e1dfdd;
  display: flex;
  align-items: center;
  justify-content: space-between;
  padding: 0 15px 0 3px;
  font-size: 7.5px;
`;

const ZoomTools = styled.div`
  display: flex;
  align-items: center;
  gap: 4px;
  color: #777;
`;

const ZoomTrack = styled.div`
  width: 62px;
  height: 1px;
  background: #8a8886;
  position: relative;
`;

const ZoomThumb = styled.div`
  position: absolute;
  left: 27px;
  top: -3px;
  width: 3px;
  height: 7px;
  background: #555;
`;

const ZoomValue = styled.div`
  margin-left: 6px;
`;

const FitGlyph = styled.div`
  width: 11px;
  height: 8px;
  margin-left: 8px;
  border: 1px solid #777;
`;

const Overlay = styled.svg`
  position: absolute;
  left: 0;
  top: 0;
  pointer-events: none;
`;

const RedBox = styled.div`
  position: absolute;
  left: ${(p) => p.$x}px;
  top: ${(p) => p.$y}px;
  width: ${(p) => p.$w}px;
  height: ${(p) => p.$h}px;
  border: 1.5px solid #f01818;
`;

const Badge = styled.div`
  position: absolute;
  left: ${(p) => p.$x - 9}px;
  top: ${(p) => p.$y - 9}px;
  width: 18px;
  height: 18px;
  border-radius: 50%;
  background: #0000e6;
  border: 1.5px solid #fff;
  color: #fff;
  font: 700 11px "Liberation Sans", sans-serif;
  display: flex;
  align-items: center;
  justify-content: center;
`;

const Callout = styled.div`
  position: absolute;
  left: 961px;
  top: 58px;
  font-size: 13px;
  line-height: 17px;
  font-weight: 700;
  color: #f01010;
  white-space: nowrap;
`;
